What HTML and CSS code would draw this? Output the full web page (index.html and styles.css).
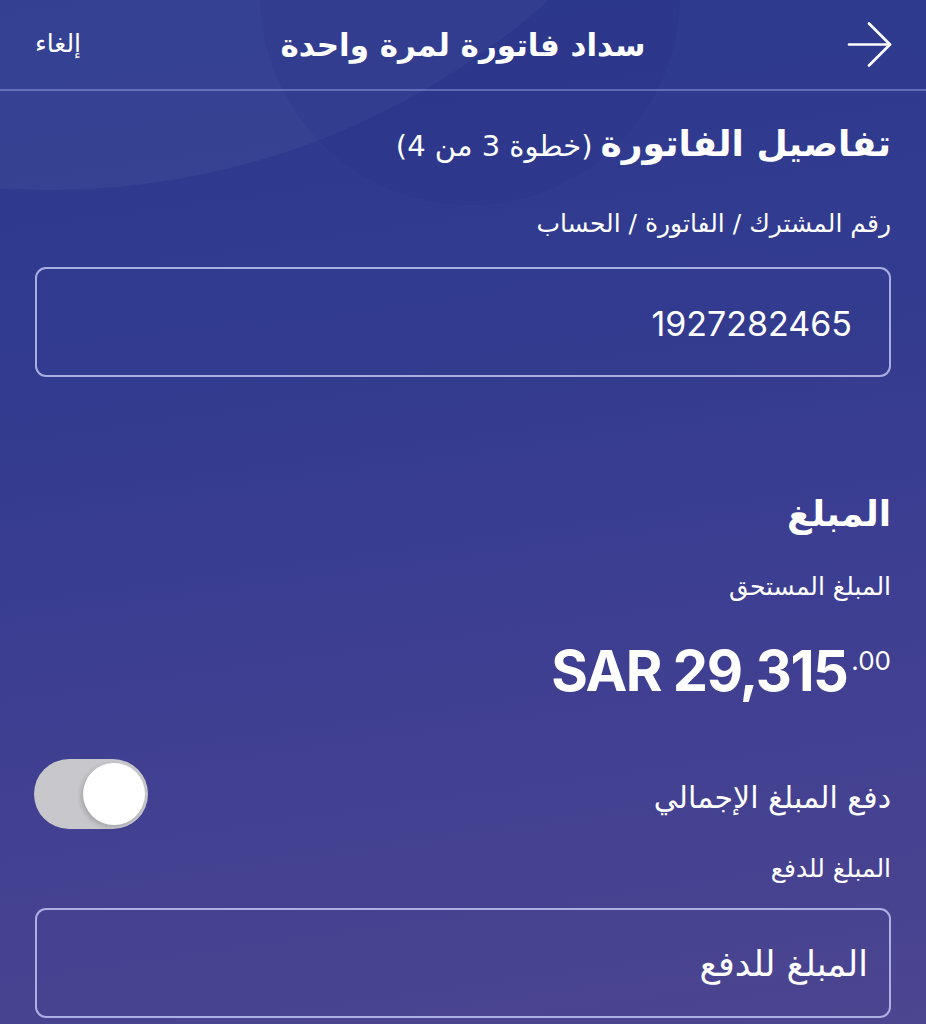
FILE: index.html
```html
<!DOCTYPE html>
<html lang="ar" dir="rtl">
<head>
<meta charset="utf-8">
<title>سداد فاتورة لمرة واحدة</title>
<link rel="stylesheet" href="styles.css">
</head>
<body>
<div class="screen">
  <div class="glow glow-a"></div>
  <div class="glow glow-b"></div>

  <header class="topbar">
    <button class="back" aria-label="رجوع">
      <svg width="46" height="46" viewBox="0 0 46 46" fill="none" stroke="#fff" stroke-width="2.6" stroke-linecap="round" stroke-linejoin="round">
        <path d="M2 22.5 H43"/>
        <path d="M22 1.5 L43 22.5 L22 43.5"/>
      </svg>
    </button>
    <h1 class="title">سداد فاتورة لمرة واحدة</h1>
    <button class="cancel">إلغاء</button>
  </header>

  <main class="content">
    <h2 class="section-title">تفاصيل الفاتورة<span class="step">(خطوة 3 من 4)</span></h2>
    <label class="field-label id-label">رقم المشترك / الفاتورة / الحساب</label>
    <div class="field id-field"><span class="field-value num">1927282465</span></div>

    <h2 class="section-title amount-title">المبلغ</h2>
    <div class="field-label due-label">المبلغ المستحق</div>
    <div class="amount num" dir="ltr">SAR 29,315<sup>.00</sup></div>

    <div class="toggle-row">
      <span class="toggle-label">دفع المبلغ الإجمالي</span>
      <span class="switch"><span class="knob"></span></span>
    </div>

    <label class="field-label pay-label">المبلغ للدفع</label>
    <div class="field pay-field"><span class="placeholder">المبلغ للدفع</span></div>
  </main>
</div>
</body>
</html>
```

FILE: styles.css
```css
* { box-sizing: border-box; }

html, body {
  margin: 0;
  padding: 0;
}

body {
  width: 926px;
  height: 1024px;
  overflow: hidden;
  font-family: "DejaVu Sans", "Noto Sans", sans-serif;
  color: #fff;
}

.screen {
  position: relative;
  width: 926px;
  height: 1024px;
  overflow: hidden;
  background: linear-gradient(172deg, #2c3a8e 0%, #323b8f 35%, #3f3f92 65%, #4c4590 100%);
}

/* soft decorative circles behind the header */
.glow {
  position: absolute;
  border-radius: 50%;
  pointer-events: none;
}
.glow-a {
  width: 1500px;
  height: 1500px;
  left: -700px;
  top: -1310px;
  background: rgba(255, 255, 255, 0.04);
}
.glow-b {
  width: 420px;
  height: 420px;
  left: 260px;
  top: -215px;
  background: rgba(20, 30, 110, 0.08);
}

.topbar {
  position: relative;
  height: 91px;
  display: flex;
  align-items: center;
  justify-content: space-between;
  padding: 0 33px 0 35px;
  border-bottom: 2px solid rgba(160, 170, 230, 0.45);
}

.back, .cancel {
  background: none;
  border: 0;
  padding: 0;
  color: #fff;
  font: inherit;
}
.back {
  width: 46px;
  height: 46px;
  margin-top: 1px;
}
.back svg { display: block; }

.cancel {
  font-size: 25px;
  margin-top: -2px;
}

.title {
  position: absolute;
  left: 0;
  right: 0;
  top: 0;
  height: 89px;
  margin: 0;
  display: flex;
  align-items: center;
  justify-content: center;
  font-size: 31px;
  font-weight: 700;
  pointer-events: none;
}

.content {
  position: relative;
  padding: 0 35px;
}

.section-title {
  margin: 26px 0 0;
  font-size: 36px;
  line-height: 54px;
  font-weight: 700;
}
.step {
  font-size: 29px;
  font-weight: 400;
  margin-right: 8px;
}

.field-label {
  display: block;
  font-size: 25px;
  line-height: 34px;
}
.id-label { margin-top: 34px; }
.due-label { margin-top: 29px; }
.pay-label { margin-top: 23px; }

.field {
  height: 110px;
  border: 2px solid rgba(190, 195, 240, 0.85);
  border-radius: 11px;
  display: flex;
  align-items: center;
  padding: 0 37px 0 24px;
}
.id-field { margin-top: 26px; }
.pay-field { margin-top: 22px; }

.num {
  font-family: "Inter", "Roboto", "Liberation Sans", sans-serif;
}

.field-value {
  font-size: 34px;
  font-weight: 400;
  margin-top: 2px;
}

.amount-title {
  margin-top: 110px;
}

.amount {
  margin-top: 32px;
  font-size: 56px;
  font-weight: 700;
  line-height: 70px;
  text-align: right;
  letter-spacing: -1.5px;
}
.amount sup {
  font-size: 26px;
  font-weight: 400;
  vertical-align: 21px;
  line-height: 0;
  letter-spacing: 0;
  margin-left: 4px;
}

.toggle-row {
  margin-top: 53px;
  display: flex;
  align-items: center;
  justify-content: space-between;
}
.toggle-label {
  font-size: 30px;
  margin-top: 6px;
}

.switch {
  width: 114px;
  height: 70px;
  border-radius: 35px;
  background: #c8c8cc;
  display: flex;
  align-items: center;
  padding: 0 3px;
  margin-left: -1px;
}
.knob {
  width: 62px;
  height: 62px;
  border-radius: 50%;
  background: #fff;
  box-shadow: -2px 2px 5px rgba(0, 0, 0, 0.18);
}

.placeholder {
  font-size: 35px;
  margin-right: -16px;
  margin-top: 2px;
}
```
